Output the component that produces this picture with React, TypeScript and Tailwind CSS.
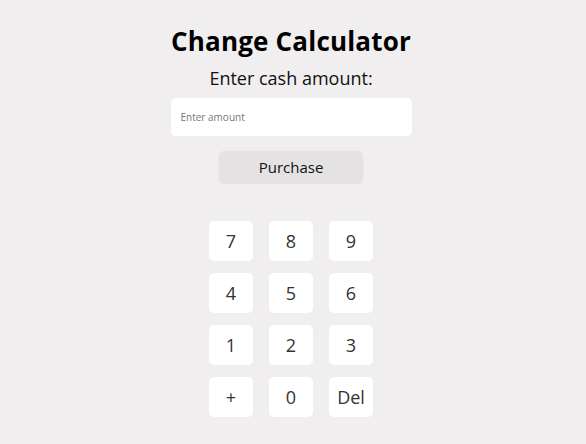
const KEYS = ["7", "8", "9", "4", "5", "6", "1", "2", "3", "+", "0", "Del"];

export default function App() {
  return (
    <div
      className="min-h-screen bg-[#f0eeef] flex flex-col items-center pt-[24px] pr-[4px]"
      style={{ fontFamily: '"Open Sans", "Noto Sans", sans-serif' }}
    >
      <h1 className="text-[26px] leading-[34px] font-bold text-black tracking-[0.2px]">Change Calculator</h1>
      <p className="mt-[8px] text-[18px] leading-[24px] text-[#111]">Enter cash amount:</p>
      <input
        type="text"
        placeholder="Enter amount"
        className="mt-[8px] w-[241px] h-[38px] rounded-[5px] bg-white px-[10px] text-[10px] text-[#333] placeholder:text-[#777] outline-none"
      />
      <button className="mt-[15px] w-[144px] h-[32px] rounded-[5px] bg-[#e4e2e3] text-[15px] font-medium text-[#111] shadow-[0_1px_2px_rgba(0,0,0,0.06)]">
        Purchase
      </button>
      <div className="mt-[38px] grid grid-cols-[44px_44px_44px] gap-x-[16px] gap-y-[12px]">
        {KEYS.map((k) => (
          <button
            key={k}
            className="h-[40px] rounded-[5px] bg-white text-[18px] text-[#333] flex items-center justify-center"
          >
            {k}
          </button>
        ))}
      </div>
    </div>
  );
}
